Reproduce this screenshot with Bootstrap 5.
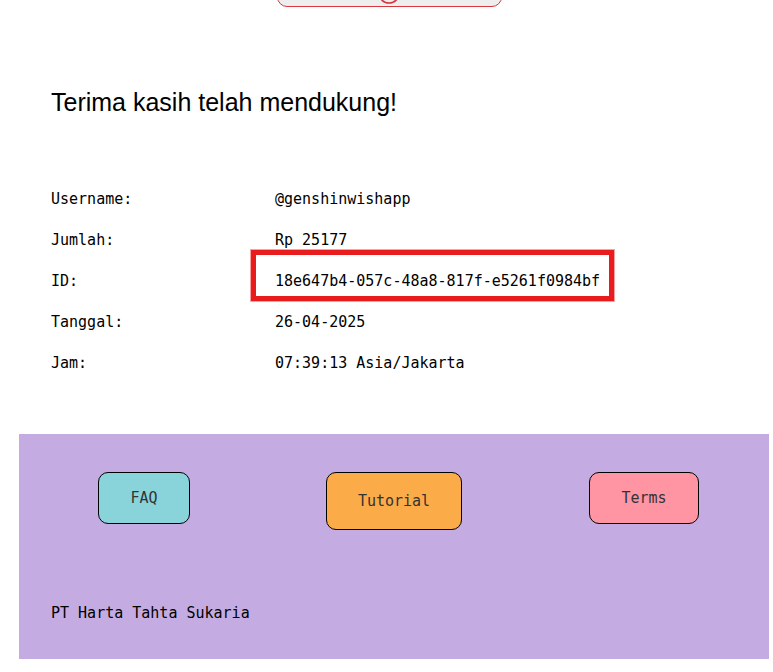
<!DOCTYPE html>
<html lang="id">
<head>
<meta charset="utf-8">
<meta name="viewport" content="width=device-width, initial-scale=1">
<title>Terima kasih telah mendukung!</title>
<link rel="stylesheet" href="https://cdn.jsdelivr.net/npm/bootstrap@5.3.0/dist/css/bootstrap.min.css">
<style>
  body { font: 15px/24px Consolas, "DejaVu Sans Mono", monospace; color: #000; background: #fff; }
  .page { padding: 0 4px 0 19px; }
  .status-row { height: 7px; padding-right: 10px; }
  .status-box { width: 225px; height: 40px; background: #eee; border: 1px solid #d9363e; border-radius: 10px; padding-bottom: 2px; }
  .receipt { padding: 79px 32px 51px; }
  .receipt-title { font: 25px/32px "Liberation Sans", sans-serif; margin-bottom: 60px; }
  .receipt-table { width: 100%; }
  .receipt-table th { width: 224px; font-weight: 400; }
  .receipt-table th, .receipt-table td { height: 41px; padding: 0; }
  .highlight { top: -19px; left: -24px; right: -14px; bottom: -8px; border: 5px solid #e81c1c; box-shadow: 0 0 0 1px #f9a0a0; pointer-events: none; }
  .site-footer { background: #c4ace2; padding: 38px 0 34px; }
  .footer-links { min-height: 129px; }
  .link-btn { font: 15px/24px Consolas, "DejaVu Sans Mono", monospace; padding: 13px 31px; border: 1px solid #000; border-radius: 10px; color: #333; }
  .link-btn:hover { border-color: #000; color: #000; }
  .link-faq, .link-faq:hover { background: #89d3db; }
  .link-tutorial, .link-tutorial:hover { background: #fbac48; padding-top: 16px; padding-bottom: 16px; }
  .link-terms, .link-terms:hover { background: #ff95a3; }
  .company { padding: 0 32px; }
</style>
<script defer src="https://cdn.jsdelivr.net/npm/bootstrap@5.3.0/dist/js/bootstrap.bundle.min.js"></script>
</head>
<body>
<div class="page">
  <div class="status-row d-flex justify-content-center align-items-end">
    <div class="status-box d-flex justify-content-center align-items-end flex-shrink-0">
      <svg width="22" height="22" viewBox="0 0 22 22" aria-hidden="true"><circle cx="11" cy="11" r="10" fill="none" stroke="#d9363e" stroke-width="1.6"/></svg>
    </div>
  </div>
  <main class="receipt">
    <h1 class="receipt-title">Terima kasih telah mendukung!</h1>
    <table class="receipt-table align-middle">
      <tbody>
        <tr><th scope="row">Username:</th><td>@genshinwishapp</td></tr>
        <tr><th scope="row">Jumlah:</th><td>Rp 25177</td></tr>
        <tr><th scope="row">ID:</th><td><span class="position-relative d-inline-block">18e647b4-057c-48a8-817f-e5261f0984bf<span class="highlight position-absolute"></span></span></td></tr>
        <tr><th scope="row">Tanggal:</th><td>26-04-2025</td></tr>
        <tr><th scope="row">Jam:</th><td>07:39:13 Asia/Jakarta</td></tr>
      </tbody>
    </table>
  </main>
  <footer class="site-footer">
    <nav class="footer-links row g-0 align-items-start text-center">
      <div class="col-4"><a class="btn link-btn link-faq" href="#faq">FAQ</a></div>
      <div class="col-4"><a class="btn link-btn link-tutorial" href="#tutorial">Tutorial</a></div>
      <div class="col-4"><a class="btn link-btn link-terms" href="#terms">Terms</a></div>
    </nav>
    <p class="company mb-0">PT Harta Tahta Sukaria</p>
  </footer>
</div>
</body>
</html>
